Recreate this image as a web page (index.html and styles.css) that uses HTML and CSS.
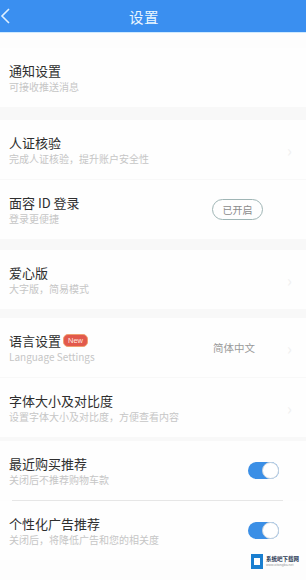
FILE: index.html
```html
<!DOCTYPE html>
<html lang="zh">
<head>
<meta charset="utf-8">
<link rel="stylesheet" href="styles.css">
</head>
<body>
<div class="page">
  <header class="topbar">
    <svg class="back" width="12" height="16" viewBox="0 0 12 16"><path d="M9 1 L2 8 L9 15" fill="none" stroke="#dff0ff" stroke-width="1.6"/></svg>
    <span class="title">设置</span>
  </header>
  <div class="spacer-top"></div>

  <div class="row">
    <div class="text"><div class="t">通知设置</div><div class="s">可接收推送消息</div></div>
  </div>
  <div class="band band-13"></div>

  <div class="row">
    <div class="text"><div class="t">人证核验</div><div class="s">完成人证核验，提升账户安全性</div></div>
    <span class="chev">›</span>
  </div>
  <div class="band band-1"></div>

  <div class="row">
    <div class="text"><div class="t">面容 ID 登录</div><div class="s">登录更便捷</div></div>
    <span class="pill">已开启</span>
  </div>
  <div class="band band-11"></div>

  <div class="row">
    <div class="text"><div class="t">爱心版</div><div class="s">大字版，简易模式</div></div>
    <span class="chev">›</span>
  </div>
  <div class="band band-9"></div>

  <div class="row">
    <div class="text"><div class="t">语言设置<span class="new">New</span></div><div class="s">Language Settings</div></div>
    <span class="value">简体中文</span>
    <span class="chev">›</span>
  </div>
  <div class="band band-1"></div>

  <div class="row">
    <div class="text"><div class="t">字体大小及对比度</div><div class="s">设置字体大小及对比度，方便查看内容</div></div>
    <span class="chev">›</span>
  </div>
  <div class="band band-4"></div>

  <div class="row">
    <div class="text"><div class="t">最近购买推荐</div><div class="s">关闭后不推荐购物车款</div></div>
    <span class="toggle"><span class="knob"></span></span>
  </div>
  <div class="divider"></div>

  <div class="row">
    <div class="text"><div class="t">个性化广告推荐</div><div class="s">关闭后，将降低广告和您的相关度</div></div>
    <span class="toggle"><span class="knob"></span></span>
  </div>

  <div class="mark">
    <span class="mark-icon"><span class="mark-inner"></span></span>
    <span class="mark-text"><span class="mt1">系统吧下载网</span><span class="mt2">www.xitongba.net</span></span>
  </div>
</div>
</body>
</html>
```
FILE: styles.css
```css
* { box-sizing: border-box; margin: 0; padding: 0; }
html, body { width: 306px; height: 580px; overflow: hidden; }
body { background: #fdfdfd; font-family: "Noto Sans CJK SC", "Noto Sans", sans-serif; color: #333; }
.page { position: relative; width: 306px; height: 580px; }
.topbar {
  height: 33px; background: #3a8ff0; display: flex; align-items: center; justify-content: center;
  position: relative; border-bottom: 1px solid #cfeaff; padding-right: 18px;
}
.back { position: absolute; left: 0; top: 8px; }
.title { color: #e9f6ff; font-size: 14.5px; letter-spacing: 0.5px; }
.spacer-top { height: 15px; }
.row {
  display: flex; align-items: center; padding: 14px 25px 14px 9px; background: #fefefe;
}
.text { flex: 1; display: flex; flex-direction: column; gap: 1px; }
.t { font-size: 13px; line-height: 17px; color: #2e2e2e; display: flex; align-items: center; }
.s { font-size: 10px; line-height: 13px; color: #c6c6c6; }
.band { background: #f8f8f8; }
.band-13 { height: 13px; }
.band-11 { height: 11px; }
.band-9 { height: 9px; }
.band-4 { height: 4px; }
.band-1 { height: 1px; }
.chev { color: #f0f0f0; font-size: 16px; line-height: 1; margin-left: 6px; margin-right: -18px; width: 12px; }
.pill {
  width: 51px; height: 21px; border: 1px solid #9fb5b5; border-radius: 11px; font-size: 10px;
  color: #8a8a8a; display: flex; align-items: center; justify-content: center; margin-right: 18px;
}
.value { font-size: 10.5px; color: #9a9a9a; margin-right: 26px; }
.new {
  display: inline-block; margin-left: 2px; background: #e2594c; color: #ffe9e0; font-size: 7.5px;
  line-height: 11px; padding: 0 4px; border-radius: 5px; border: 1px solid #f0a070; font-family: "Liberation Sans", sans-serif;
}
.toggle {
  width: 31px; height: 17px; border-radius: 9px; background: #3b8fe6; position: relative; margin-right: 2px;
}
.knob {
  position: absolute; right: 0; top: 0; width: 17px; height: 17px; border-radius: 50%;
  background: #ffffff; border: 1px solid #c9d3dc;
}
.divider { height: 1px; background: #e6e6e6; margin: 0 23px 0 12px; }
.mark { position: absolute; left: 251px; top: 554px; display: flex; align-items: center; gap: 3px; }
.mark-icon { width: 12px; height: 15px; background: #1a7fd0; display: flex; align-items: center; justify-content: center; }
.mark-inner { width: 6px; height: 7px; background: #fff; }
.mark-text { display: flex; flex-direction: column; }
.mt1 { font-size: 5.5px; line-height: 7px; color: #2b3a55; font-weight: bold; }
.mt2 { font-size: 3.5px; line-height: 4px; color: #999; font-family: "Liberation Sans", sans-serif; }
```
